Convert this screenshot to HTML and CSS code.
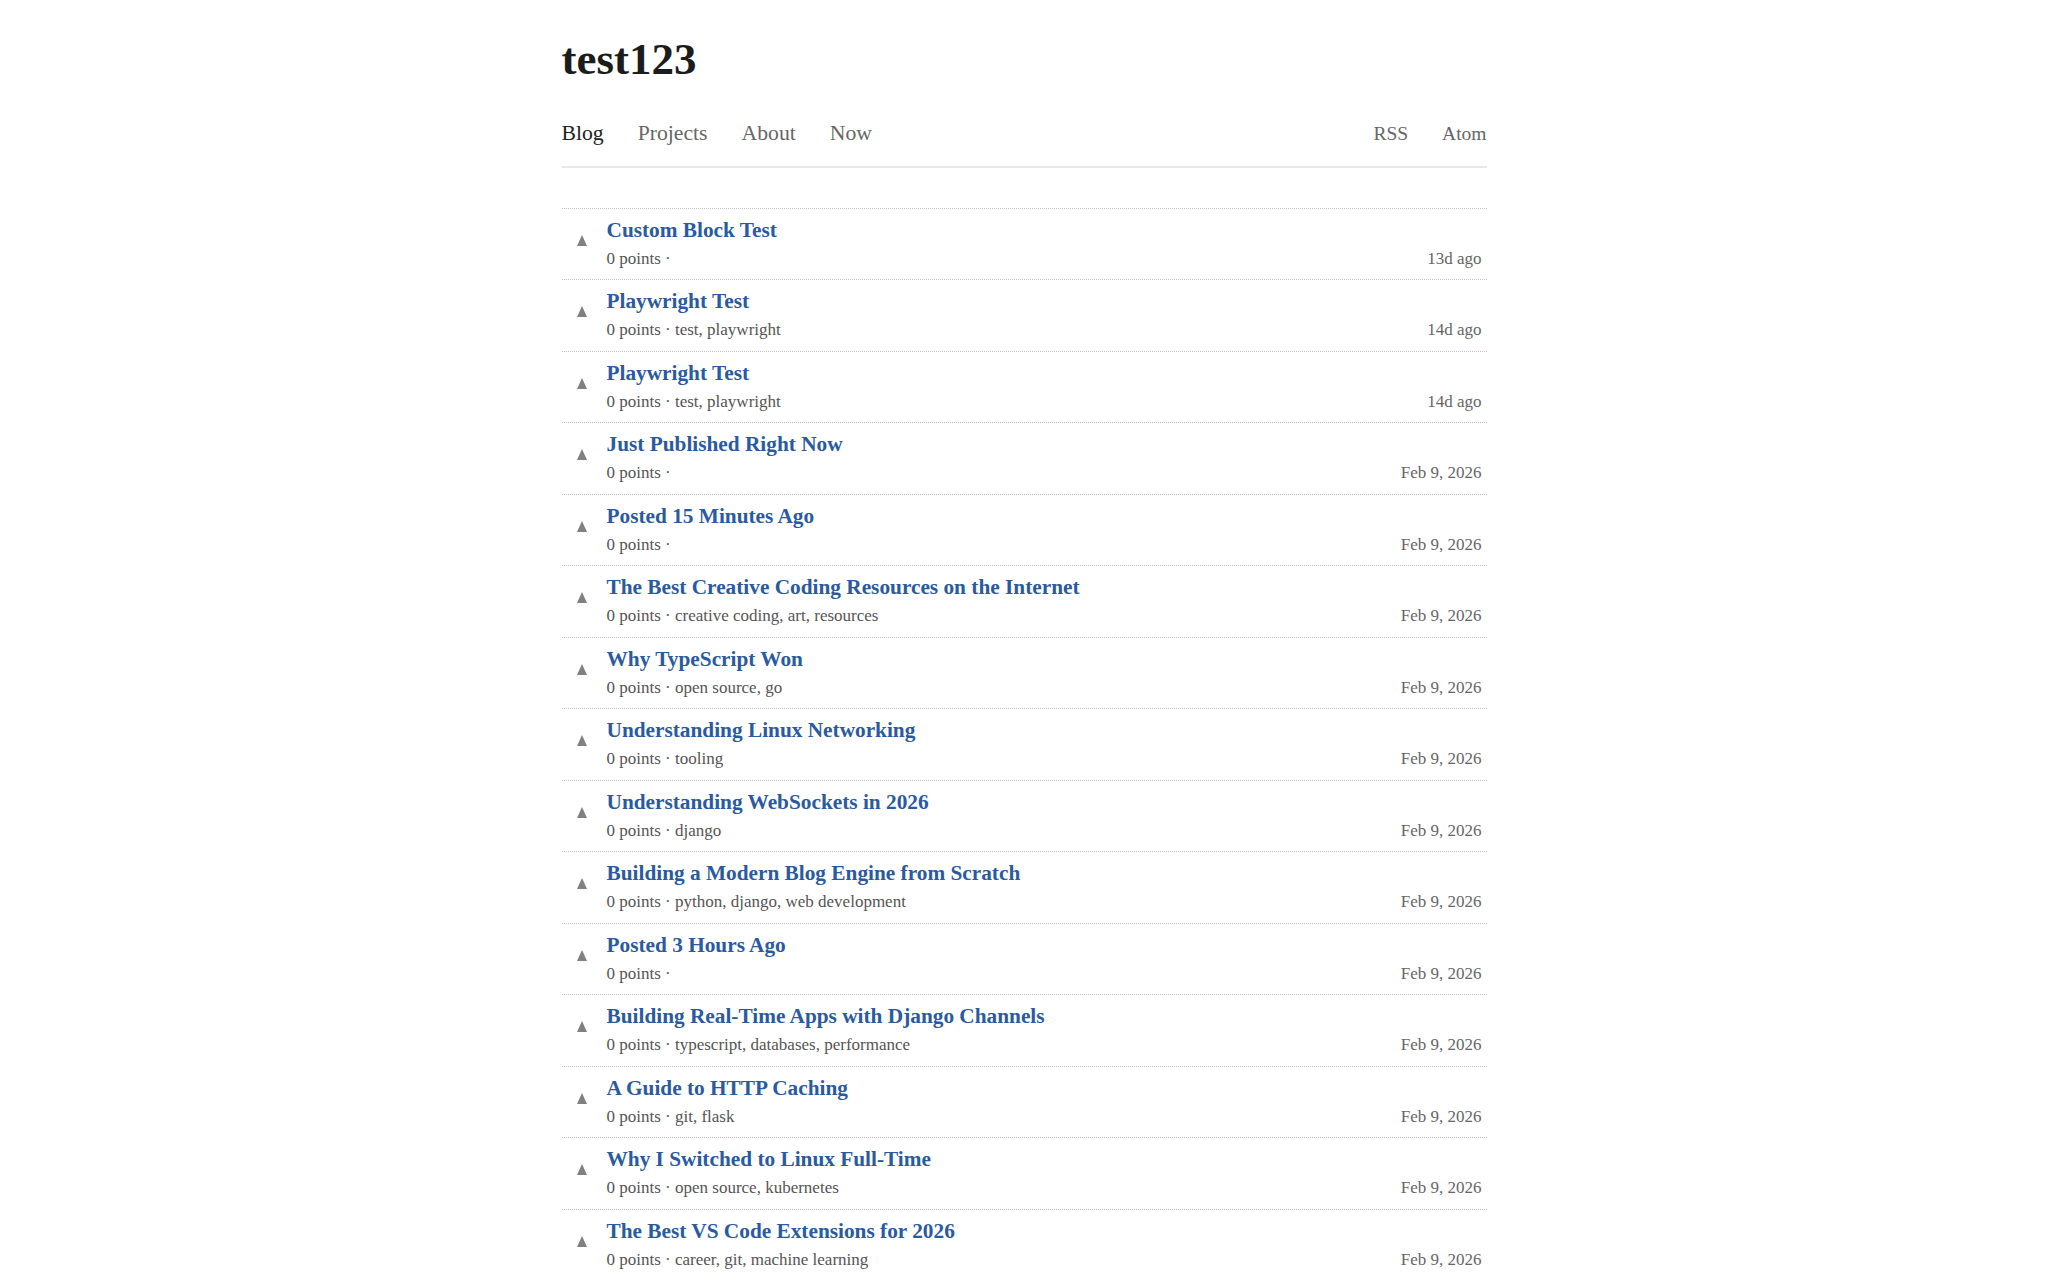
FILE: index.html
```html
<!doctype html>
<html>
<head>
<meta charset="utf-8">
<meta name="viewport" content="width=device-width,initial-scale=1">
<title>test123</title>
<link rel="stylesheet" href="styles.css">
</head>
<body>
<div class="page">
  <header class="site-header">
    <h1 class="site-title"><a href="#">test123</a></h1>
    <nav class="site-nav">
      <div class="nav-left">
        <a href="#" class="active">Blog</a>
        <a href="#">Projects</a>
        <a href="#">About</a>
        <a href="#">Now</a>
      </div>
      <div class="nav-right">
        <a href="#">RSS</a>
        <a href="#">Atom</a>
      </div>
    </nav>
  </header>

  <ul class="posts">
    <li class="post">
      <div class="vote"><span class="arrow"></span></div>
      <div class="post-body">
        <a class="post-title" href="#">Custom Block Test</a>
        <div class="post-meta">0 points ·</div>
      </div>
      <div class="post-date">13d ago</div>
    </li>
    <li class="post">
      <div class="vote"><span class="arrow"></span></div>
      <div class="post-body">
        <a class="post-title" href="#">Playwright Test</a>
        <div class="post-meta">0 points · <a href="#">test</a>, <a href="#">playwright</a></div>
      </div>
      <div class="post-date">14d ago</div>
    </li>
    <li class="post">
      <div class="vote"><span class="arrow"></span></div>
      <div class="post-body">
        <a class="post-title" href="#">Playwright Test</a>
        <div class="post-meta">0 points · <a href="#">test</a>, <a href="#">playwright</a></div>
      </div>
      <div class="post-date">14d ago</div>
    </li>
    <li class="post">
      <div class="vote"><span class="arrow"></span></div>
      <div class="post-body">
        <a class="post-title" href="#">Just Published Right Now</a>
        <div class="post-meta">0 points ·</div>
      </div>
      <div class="post-date">Feb 9, 2026</div>
    </li>
    <li class="post">
      <div class="vote"><span class="arrow"></span></div>
      <div class="post-body">
        <a class="post-title" href="#">Posted 15 Minutes Ago</a>
        <div class="post-meta">0 points ·</div>
      </div>
      <div class="post-date">Feb 9, 2026</div>
    </li>
    <li class="post">
      <div class="vote"><span class="arrow"></span></div>
      <div class="post-body">
        <a class="post-title" href="#">The Best Creative Coding Resources on the Internet</a>
        <div class="post-meta">0 points · <a href="#">creative coding</a>, <a href="#">art</a>, <a href="#">resources</a></div>
      </div>
      <div class="post-date">Feb 9, 2026</div>
    </li>
    <li class="post">
      <div class="vote"><span class="arrow"></span></div>
      <div class="post-body">
        <a class="post-title" href="#">Why TypeScript Won</a>
        <div class="post-meta">0 points · <a href="#">open source</a>, <a href="#">go</a></div>
      </div>
      <div class="post-date">Feb 9, 2026</div>
    </li>
    <li class="post">
      <div class="vote"><span class="arrow"></span></div>
      <div class="post-body">
        <a class="post-title" href="#">Understanding Linux Networking</a>
        <div class="post-meta">0 points · <a href="#">tooling</a></div>
      </div>
      <div class="post-date">Feb 9, 2026</div>
    </li>
    <li class="post">
      <div class="vote"><span class="arrow"></span></div>
      <div class="post-body">
        <a class="post-title" href="#">Understanding WebSockets in 2026</a>
        <div class="post-meta">0 points · <a href="#">django</a></div>
      </div>
      <div class="post-date">Feb 9, 2026</div>
    </li>
    <li class="post">
      <div class="vote"><span class="arrow"></span></div>
      <div class="post-body">
        <a class="post-title" href="#">Building a Modern Blog Engine from Scratch</a>
        <div class="post-meta">0 points · <a href="#">python</a>, <a href="#">django</a>, <a href="#">web development</a></div>
      </div>
      <div class="post-date">Feb 9, 2026</div>
    </li>
    <li class="post">
      <div class="vote"><span class="arrow"></span></div>
      <div class="post-body">
        <a class="post-title" href="#">Posted 3 Hours Ago</a>
        <div class="post-meta">0 points ·</div>
      </div>
      <div class="post-date">Feb 9, 2026</div>
    </li>
    <li class="post">
      <div class="vote"><span class="arrow"></span></div>
      <div class="post-body">
        <a class="post-title" href="#">Building Real-Time Apps with Django Channels</a>
        <div class="post-meta">0 points · <a href="#">typescript</a>, <a href="#">databases</a>, <a href="#">performance</a></div>
      </div>
      <div class="post-date">Feb 9, 2026</div>
    </li>
    <li class="post">
      <div class="vote"><span class="arrow"></span></div>
      <div class="post-body">
        <a class="post-title" href="#">A Guide to HTTP Caching</a>
        <div class="post-meta">0 points · <a href="#">git</a>, <a href="#">flask</a></div>
      </div>
      <div class="post-date">Feb 9, 2026</div>
    </li>
    <li class="post">
      <div class="vote"><span class="arrow"></span></div>
      <div class="post-body">
        <a class="post-title" href="#">Why I Switched to Linux Full-Time</a>
        <div class="post-meta">0 points · <a href="#">open source</a>, <a href="#">kubernetes</a></div>
      </div>
      <div class="post-date">Feb 9, 2026</div>
    </li>
    <li class="post">
      <div class="vote"><span class="arrow"></span></div>
      <div class="post-body">
        <a class="post-title" href="#">The Best VS Code Extensions for 2026</a>
        <div class="post-meta">0 points · <a href="#">career</a>, <a href="#">git</a>, <a href="#">machine learning</a></div>
      </div>
      <div class="post-date">Feb 9, 2026</div>
    </li>
  </ul>
</div>
</body>
</html>
```

FILE: styles.css
```css
body {
  margin: 0;
  background: #fff;
  color: #222;
  font-family: "Liberation Serif", "Times New Roman", serif;
  font-size: 17px;
}
a {
  color: inherit;
  text-decoration: none;
}
.page {
  width: 925px;
  margin: 0 auto;
}

/* header */
.site-title {
  margin: 32px 0 0;
  font-size: 45px;
  line-height: 54px;
  font-weight: bold;
  color: #1c1c1c;
}
.site-nav {
  display: flex;
  justify-content: space-between;
  align-items: center;
  margin-top: 32px;
  padding-bottom: 16px;
  border-bottom: 2px solid #e8e8e8;
  line-height: 31.5px;
}
.nav-left,
.nav-right {
  display: flex;
  gap: 34px;
}
.nav-left {
  font-size: 21.7px;
}
.nav-right {
  font-size: 19.5px;
}
.site-nav a {
  color: #666;
}
.site-nav a.active {
  color: #222;
}

/* post list */
.posts {
  list-style: none;
  margin: 40px 0 0;
  padding: 0;
  border-top: 1px dotted #c4c4c4;
}
.post {
  display: flex;
  padding: 9px 5px 8px 0;
  border-bottom: 1px dotted #c4c4c4;
}
.vote {
  width: 30px;
  padding-left: 15px;
  flex: none;
}
.arrow {
  display: block;
  margin-top: 17px;
  width: 0;
  height: 0;
  border-left: 5.5px solid transparent;
  border-right: 5.5px solid transparent;
  border-bottom: 11px solid #808080;
}
.post-body {
  flex: 1;
}
.post-title {
  display: block;
  margin-bottom: 4px;
  font-size: 21.3px;
  line-height: 24px;
  font-weight: bold;
  color: #2a5aa0;
}
.post-meta {
  line-height: 25.5px;
  color: #555;
}
.post-meta a {
  color: #555;
}
.post-date {
  align-self: flex-end;
  line-height: 25.5px;
  color: #666;
}
```
